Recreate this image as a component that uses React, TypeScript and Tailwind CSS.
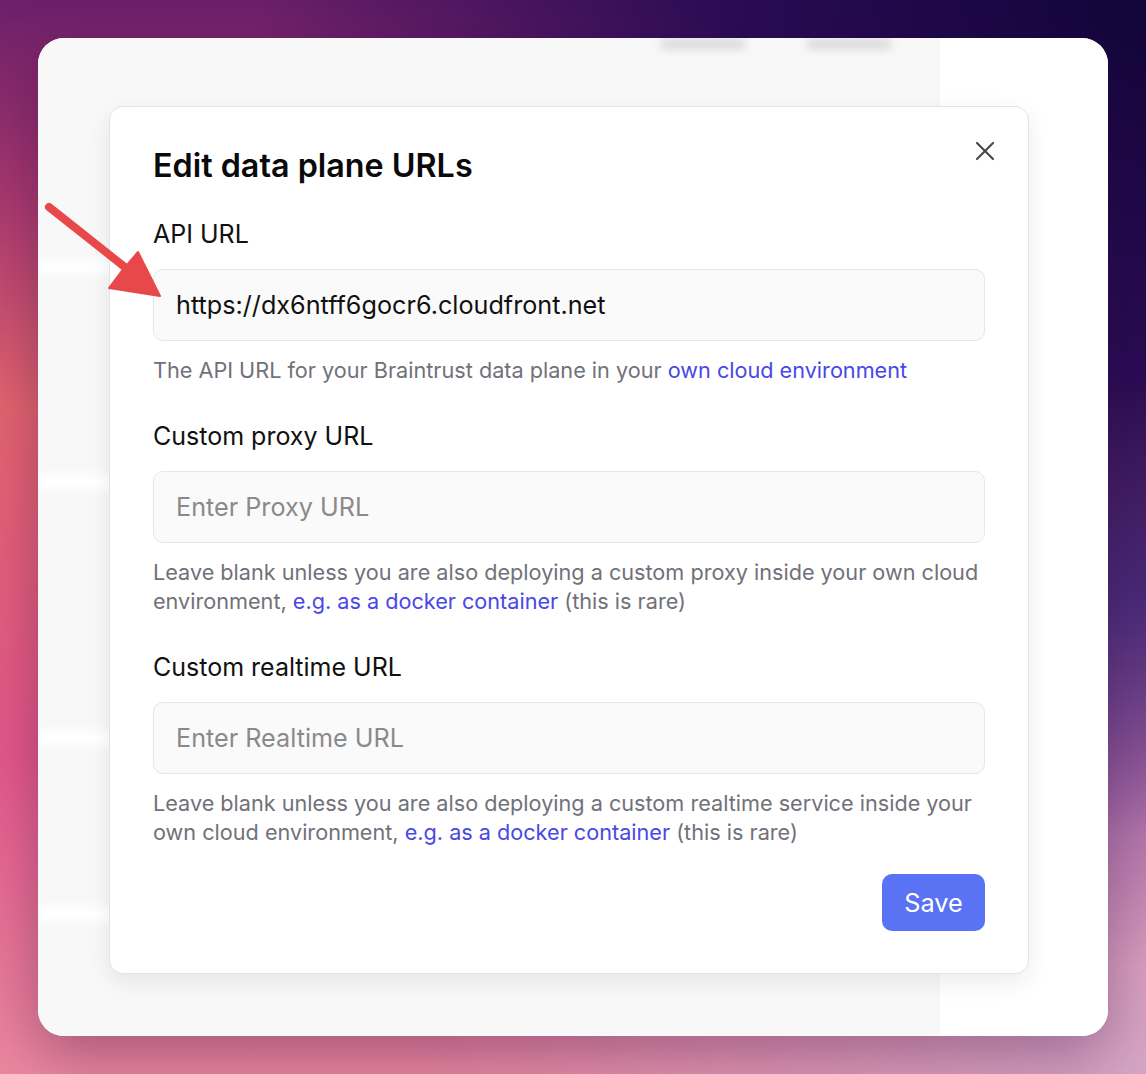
import { X } from 'lucide-react'

const bg =
  'bg-[radial-gradient(ellipse_at_100%_0%,#13053a_0%,#2a0c55_25%,transparent_55%),radial-gradient(ellipse_at_100%_55%,#6a4a9e_0%,transparent_45%),radial-gradient(ellipse_at_100%_100%,#d6a6c6_0%,transparent_45%),linear-gradient(180deg,#6c1f6a_0%,#a8386f_18%,#e5656f_38%,#e5588a_70%,#ec88a0_100%)]'

function Field({
  label,
  value,
  placeholder,
  children,
}: {
  label: string
  value?: string
  placeholder?: string
  children: React.ReactNode
}) {
  return (
    <div className="flex flex-col">
      <label className="text-[25px] leading-[32px] text-[#111111]">{label}</label>
      <input
        readOnly
        defaultValue={value}
        placeholder={placeholder}
        className="mt-[19px] h-[72px] w-full rounded-[10px] border border-[#e6e6e6] bg-[#fafafa] px-[22px] text-[25.2px] text-[#111111] outline-none placeholder:text-[#8a8a8a]"
      />
      <p className="mt-[15px] text-[21.65px] leading-[29px] text-[#71717a]">{children}</p>
    </div>
  )
}

export default function App() {
  return (
    <div className={`relative h-[1074px] w-[1146px] overflow-hidden p-[38px] font-['Inter',sans-serif] ${bg}`}>
      <div className="relative flex h-[998px] overflow-hidden rounded-[26px] bg-white shadow-[0_20px_60px_rgba(40,10,60,0.35)]">
        {/* blurred page behind the dialog */}
        <div className="flex w-[902px] flex-col bg-[#f8f8f8]">
          <div className="flex h-[20px] gap-[60px] pl-[622px]">
            <div className="h-[12px] w-[86px] rounded-full bg-[#dcdcdc] blur-[4px]" />
            <div className="h-[12px] w-[86px] rounded-full bg-[#dcdcdc] blur-[4px]" />
          </div>
          <div className="h-[202px]" />
          <div className="h-[14px] bg-white blur-[4px]" />
          <div className="h-[200px]" />
          <div className="h-[16px] bg-white blur-[4px]" />
          <div className="h-[240px]" />
          <div className="h-[16px] bg-white blur-[4px]" />
          <div className="h-[160px]" />
          <div className="h-[16px] bg-white blur-[4px]" />
        </div>
        <div className="flex-1 bg-white" />

        {/* dialog */}
        <div className="absolute left-[71px] top-[68px] flex w-[920px] flex-col rounded-[14px] border border-[#e4e4e4] bg-white pb-[42px] pl-[43px] pr-[43px] pt-[41px] shadow-[0_8px_24px_rgba(0,0,0,0.08)]">
          <button className="absolute right-[27px] top-[28px] flex h-[32px] w-[32px] items-center justify-center text-[#4a4a4a]">
            <X size={32} strokeWidth={1.6} />
          </button>
          <h2 className="text-[32.3px] font-semibold leading-[36px] text-[#0a0a0a]">Edit data plane URLs</h2>
          <div className="mt-[34px] flex flex-col gap-[35px]">
            <Field label="API URL" value="https://dx6ntff6gocr6.cloudfront.net">
              The API URL for your Braintrust data plane in your{' '}
              <a className="text-[#4848e6]">own cloud environment</a>
            </Field>
            <Field label="Custom proxy URL" placeholder="Enter Proxy URL">
              Leave blank unless you are also deploying a custom proxy inside your own cloud environment,{' '}
              <a className="text-[#4848e6]">e.g. as a docker container</a> (this is rare)
            </Field>
            <Field label="Custom realtime URL" placeholder="Enter Realtime URL">
              Leave blank unless you are also deploying a custom realtime service inside your own cloud environment,{' '}
              <a className="text-[#4848e6]">e.g. as a docker container</a> (this is rare)
            </Field>
          </div>
          <div className="mt-[27px] flex justify-end">
            <button className="h-[57px] w-[103px] rounded-[10px] bg-[#5a73f4] text-[25.3px] text-white">Save</button>
          </div>
        </div>
      </div>

      {/* annotation arrow */}
      <svg className="pointer-events-none absolute left-0 top-0" width="1146" height="1074" viewBox="0 0 1146 1074">
        <line x1="49" y1="207" x2="126" y2="268" stroke="#e8484a" strokeWidth="8" strokeLinecap="round" />
        <path d="M160 296 L109 288 L121 272 L138 252 Z" fill="#e8484a" strokeLinejoin="round" stroke="#e8484a" strokeWidth="2" />
      </svg>
    </div>
  )
}
